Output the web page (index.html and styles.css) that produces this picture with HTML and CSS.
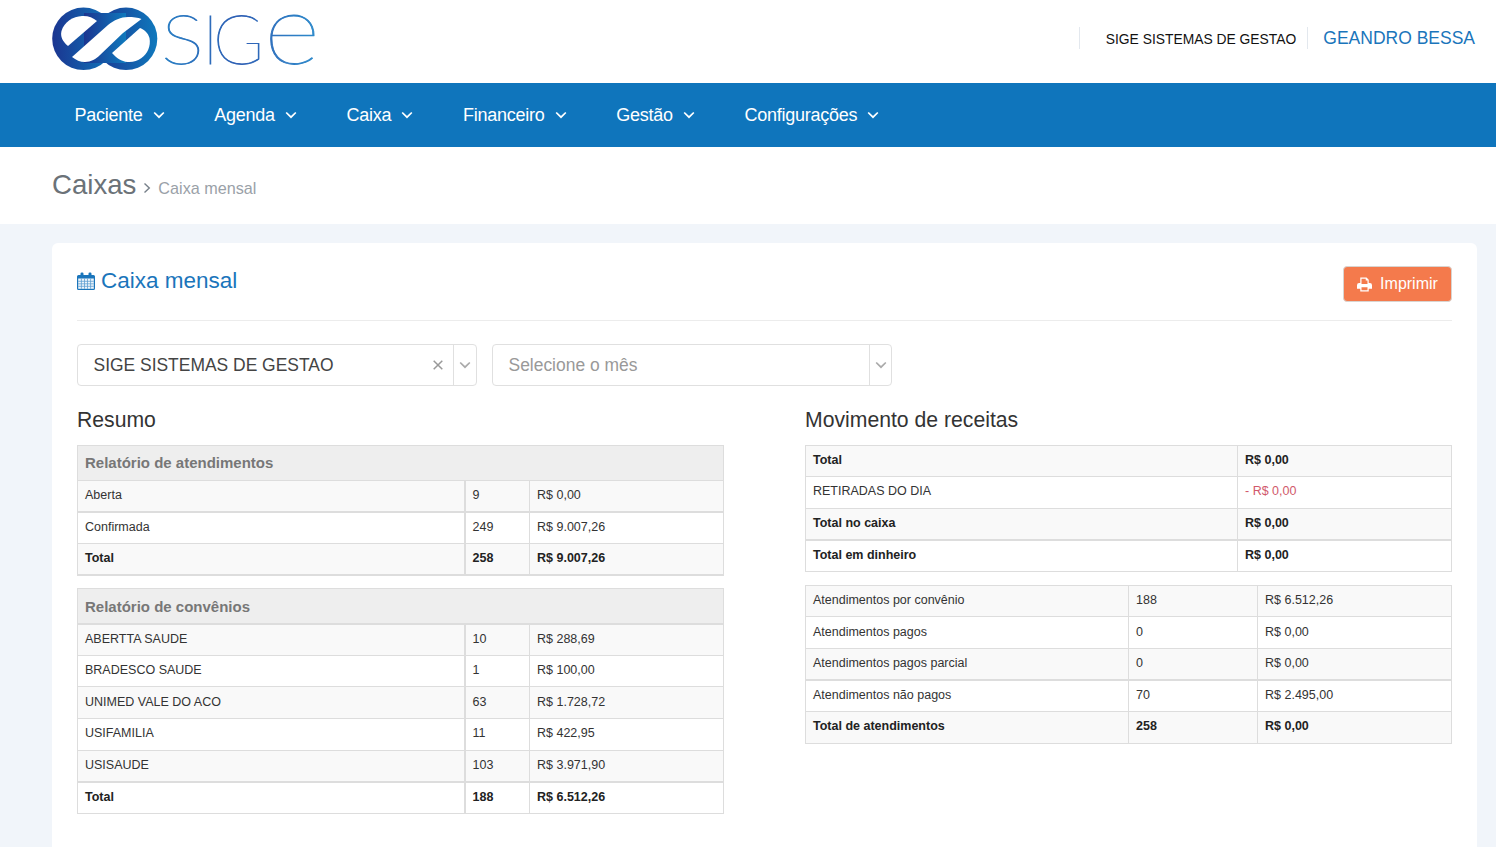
FILE: index.html
```html
<!DOCTYPE html>
<html lang="pt-BR">
<head>
<meta charset="utf-8">
<title>Caixa mensal</title>
<link rel="stylesheet" href="styles.css">
</head>
<body>
<svg class="defs" width="0" height="0" aria-hidden="true">
  <defs>
    <linearGradient id="markGrad" x1="0" y1="0" x2="1" y2="0">
      <stop offset="0" stop-color="#1b3590"/>
      <stop offset="1" stop-color="#0f79bd"/>
    </linearGradient>
    <linearGradient id="wordGrad" gradientUnits="userSpaceOnUse" x1="164" y1="0" x2="316" y2="0">
      <stop offset="0" stop-color="#2a7fc4"/>
      <stop offset=".5" stop-color="#2f5fb4"/>
      <stop offset="1" stop-color="#2d8acb"/>
    </linearGradient>
    <symbol id="chev" viewBox="0 0 12 8"><path d="M1.2 1.5 6 6.2l4.8-4.7" fill="none" stroke="currentColor" stroke-width="1.7"/></symbol>
  </defs>
</svg>
<header class="top">
  <svg class="logo" width="280" height="83" viewBox="40 0 280 83" role="img" aria-label="SIGE">
    <circle cx="83.5" cy="38.8" r="31.3" fill="url(#markGrad)"/>
    <circle cx="126" cy="38.8" r="31.3" fill="url(#markGrad)"/>
    <rect x="84" y="13" width="42" height="50" fill="url(#markGrad)"/>
    <path d="M68 46C63 42 60 37 61.500 31 64 22 73 16.500 82 16c6-.3 11 1.500 15 5Z" fill="#fff"/>
    <path d="M72 57 108 25c6-5 13-8 20-8 5 0 10 .5 13.500 2L123 33 100 55c-4 4-9 7-15 7-5 0-9-2-13-5Z" fill="#fff"/>
    <path d="M112 53 140 28c5 2 8 5 9.500 10 1.500 8-2 16-8 20-4 3-9 4.500-14 4-6-.5-11-4-15.500-9Z" fill="#fff"/>
    <text class="word" x="161" y="63.500" font-size="69" textLength="43" lengthAdjust="spacingAndGlyphs" fill="url(#wordGrad)" stroke="url(#wordGrad)">S</text>
    <text class="word" x="202" y="63.500" font-size="69" fill="url(#wordGrad)" stroke="url(#wordGrad)">I</text>
    <text class="word" x="213" y="63.500" font-size="69" fill="url(#wordGrad)" stroke="url(#wordGrad)">G</text>
    <text class="word" x="264" y="63.500" font-size="98" textLength="56" lengthAdjust="spacingAndGlyphs" fill="url(#wordGrad)" stroke="url(#wordGrad)">e</text>
  </svg>
  <div class="account">
    <span class="company">SIGE SISTEMAS DE GESTAO</span>
    <a class="user" href="#">GEANDRO BESSA</a>
  </div>
</header>
<nav class="nav">
  <a href="#">Paciente<svg class="chev"><use href="#chev"/></svg></a>
  <a href="#">Agenda<svg class="chev"><use href="#chev"/></svg></a>
  <a href="#">Caixa<svg class="chev"><use href="#chev"/></svg></a>
  <a href="#">Financeiro<svg class="chev"><use href="#chev"/></svg></a>
  <a href="#">Gestão<svg class="chev"><use href="#chev"/></svg></a>
  <a href="#">Configurações<svg class="chev"><use href="#chev"/></svg></a>
</nav>
<div class="pagehead">
  <h1>Caixas</h1>
  <svg class="crumbsep" width="8" height="12" viewBox="0 0 8 12"><path d="M1.500 1.500 6.300 6l-4.800 4.500" fill="none" stroke="#77808a" stroke-width="1.400"/></svg>
  <span class="crumb">Caixa mensal</span>
</div>
<main class="content">
  <section class="card">
    <div class="cardhead">
      <h2>
        <svg class="calicon" width="18" height="18" viewBox="0 0 18 18">
          <path fill="#1a75bb" d="M1.500 3h2V1.700A1.200 1.200 0 0 1 4.700.5h.6a1.200 1.200 0 0 1 1.200 1.200V3h5V1.700A1.200 1.200 0 0 1 12.700.5h.6a1.200 1.200 0 0 1 1.200 1.200V3h2A1.500 1.500 0 0 1 18 4.500v12a1.500 1.500 0 0 1-1.500 1.500h-15A1.500 1.500 0 0 1 0 16.500v-12A1.500 1.500 0 0 1 1.500 3Z"/>
          <path fill="#eef5fb" d="M1.200 6.500h15.600v10.300H1.200z"/>
          <path stroke="#5f9fd2" stroke-width=".8" d="M4.400 6.500v10.300M7.500 6.500v10.300M10.500 6.500v10.300M13.600 6.500v10.300M1.200 9.300h15.600M1.200 11.800h15.600M1.200 14.300h15.600"/>
        </svg>
        Caixa mensal
      </h2>
      <button class="print" type="button">
        <svg width="15" height="15" viewBox="0 0 16 15"><path fill="#fff" d="M3.500 0h6.700L12.500 2.300V6h1.300A2.200 2.200 0 0 1 16 8.200V12h-3.500v3h-9v-3H0V8.200A2.200 2.200 0 0 1 2.200 6h1.300Zm1.300 1.300V7h6.400V3.200H9.300V1.300ZM4.800 10.500v3.200h6.400v-3.200Z"/></svg>
        Imprimir
      </button>
    </div>
    <div class="filters">
      <div class="select">
        <span class="value">SIGE SISTEMAS DE GESTAO</span>
        <svg class="clear" width="10" height="10" viewBox="0 0 10 10"><path d="M.7.700l8.600 8.600M9.300.700.7 9.300" stroke="#999" stroke-width="1.500"/></svg>
        <span class="arrow"><svg class="chev grey"><use href="#chev"/></svg></span>
      </div>
      <div class="select">
        <span class="value placeholder">Selecione o mês</span>
        <span class="arrow narrow"><svg class="chev grey"><use href="#chev"/></svg></span>
      </div>
    </div>
    <div class="columns">
      <div>
        <h3>Resumo</h3>
        <table class="tbl">
          <colgroup><col class="c387"><col class="c65"><col></colgroup>
          <tr class="band"><th colspan="3" class="lift">Relatório de atendimentos</th></tr>
          <tr class="odd thickb"><td class="wide">Aberta</td><td>9</td><td>R$ 0,00</td></tr>
          <tr><td class="wide">Confirmada</td><td>249</td><td>R$ 9.007,26</td></tr>
          <tr class="odd strong thickb"><td class="wide">Total</td><td>258</td><td>R$ 9.007,26</td></tr>
        </table>
        <table class="tbl second">
          <colgroup><col class="c387"><col class="c65"><col></colgroup>
          <tr class="band thickb"><th colspan="3">Relatório de convênios</th></tr>
          <tr class="odd"><td class="wide">ABERTTA SAUDE</td><td>10</td><td>R$ 288,69</td></tr>
          <tr><td class="wide">BRADESCO SAUDE</td><td>1</td><td>R$ 100,00</td></tr>
          <tr class="odd"><td class="wide">UNIMED VALE DO ACO</td><td>63</td><td>R$ 1.728,72</td></tr>
          <tr><td class="wide">USIFAMILIA</td><td>11</td><td>R$ 422,95</td></tr>
          <tr class="odd thickb"><td class="wide">USISAUDE</td><td>103</td><td>R$ 3.971,90</td></tr>
          <tr class="strong"><td class="wide">Total</td><td>188</td><td>R$ 6.512,26</td></tr>
        </table>
      </div>
      <div>
        <h3>Movimento de receitas</h3>
        <table class="tbl">
          <colgroup><col class="c432"><col></colgroup>
          <tr class="odd strong short"><td>Total</td><td>R$ 0,00</td></tr>
          <tr><td>RETIRADAS DO DIA</td><td class="neg">- R$ 0,00</td></tr>
          <tr class="odd strong thickb"><td>Total no caixa</td><td>R$ 0,00</td></tr>
          <tr class="strong"><td>Total em dinheiro</td><td>R$ 0,00</td></tr>
        </table>
        <table class="tbl third">
          <colgroup><col class="c323"><col class="c129"><col></colgroup>
          <tr class="odd short"><td>Atendimentos por convênio</td><td>188</td><td>R$ 6.512,26</td></tr>
          <tr><td>Atendimentos pagos</td><td>0</td><td>R$ 0,00</td></tr>
          <tr class="odd thickb"><td>Atendimentos pagos parcial</td><td>0</td><td>R$ 0,00</td></tr>
          <tr><td>Atendimentos não pagos</td><td>70</td><td>R$ 2.495,00</td></tr>
          <tr class="odd strong"><td>Total de atendimentos</td><td>258</td><td>R$ 0,00</td></tr>
        </table>
      </div>
    </div>
  </section>
</main>
</body>
</html>
```
FILE: styles.css
```css
* { box-sizing: border-box; }
html, body { margin: 0; height: 847px; overflow: hidden; }
body { background: #f1f5fa; font-family: "Liberation Sans", Arial, sans-serif; color: #333; }
a { text-decoration: none; }
.defs { position: absolute; }

.top { height: 83px; background: #fff; display: flex; align-items: flex-start; justify-content: space-between; padding-left: 40px; }
.logo { display: block; }
.word { font-family: Lato, "Liberation Sans", sans-serif; font-weight: 100; stroke-width: .8px; }
.account { display: flex; align-items: center; margin-top: 27px; margin-right: 21px; height: 22px; }
.company { border-left: 1px solid #e3e8ee; border-right: 1px solid #e3e8ee; height: 22px; padding: 3px 11px 0 26px; font-size: 13.850px; line-height: 18px; color: #111; }
.user { margin-left: 15px; font-size: 17.500px; line-height: 20px; color: #1a75bb; }

.nav { height: 64px; background: #0f75bc; display: flex; align-items: center; padding-left: 74.500px; gap: 49.700px; }
.nav a { color: #fff; font-size: 18px; letter-spacing: -.25px; display: flex; align-items: center; gap: 10px; }
.chev { width: 12px; height: 8px; color: #fff; }
.chev.grey { color: #aaa; }

.pagehead { height: 77px; background: #fff; display: flex; align-items: baseline; padding: 21px 0 0 52px; }
.pagehead h1 { margin: 0; font-size: 27.600px; line-height: 34px; font-weight: 400; color: #6b7278; }
.crumbsep { margin: 0 7px 0 7px; }
.crumb { font-size: 16.200px; color: #9aa1a8; }

.content { padding: 19px 19px 0 52px; }
.card { background: #fff; border-radius: 6px; padding: 23px 25px 40px; height: 640px; }
.cardhead { display: flex; justify-content: space-between; align-items: flex-start; height: 55px; border-bottom: 1px solid #ececec; }
.cardhead h2 { margin: 0; padding-top: 1px; font-size: 22.500px; line-height: 28px; font-weight: 400; color: #1a75bb; display: flex; align-items: center; gap: 6px; }
.print { width: 109px; height: 36px; background: #f47a4c; border: 1px solid #d9d4d0; border-radius: 4px; color: #fff; font: 16px "Liberation Sans", Arial, sans-serif; display: flex; align-items: center; justify-content: center; gap: 8px; padding: 0; }

.filters { display: flex; gap: 15px; margin-top: 23px; }
.select { width: 400px; height: 42px; border: 1px solid #e0e0e0; border-radius: 4px; display: flex; align-items: center; padding-left: 15.500px; font-size: 17.450px; color: #444; }
.value { flex: 1; }
.placeholder { color: #999; }
.clear { margin-right: 10px; }
.arrow { width: 23px; height: 100%; border-left: 1px solid #e0e0e0; display: flex; align-items: center; justify-content: center; }
.arrow.narrow { width: 22px; }

.columns { display: grid; grid-template-columns: 647px 647px; column-gap: 81px; margin-top: 19px; }
h3 { margin: 0 0 11px; font-size: 21.200px; line-height: 29px; font-weight: 400; color: #333; }

.tbl { border-collapse: collapse; table-layout: fixed; width: 647px; font-size: 12.500px; }
.tbl td, .tbl th { border: 1px solid #ddd; padding: 0 7px 2px; height: 31.600px; text-align: left; vertical-align: middle; }
.tbl td { color: #333; }
.tbl th { height: 35px; padding-bottom: 0; background: #eee; color: #777; font-size: 15px; font-weight: 700; }
.tbl .lift { padding-bottom: 2px; }
.tbl .short td { height: 31px; }
.odd td { background: #f9f9f9; }
.strong td { font-weight: 700; color: #222; }
.thickb td, .thickb th { border-bottom-width: 2px; }
.second { margin-top: 12px; }
.third { margin-top: 13.500px; }
.tbl .neg { color: #d1596b; }
.tbl .wide { border-right-width: 2px; }

.c387 { width: 387px; }
.c65 { width: 65px; }
.c432 { width: 432px; }
.c323 { width: 323px; }
.c129 { width: 129px; }
```
